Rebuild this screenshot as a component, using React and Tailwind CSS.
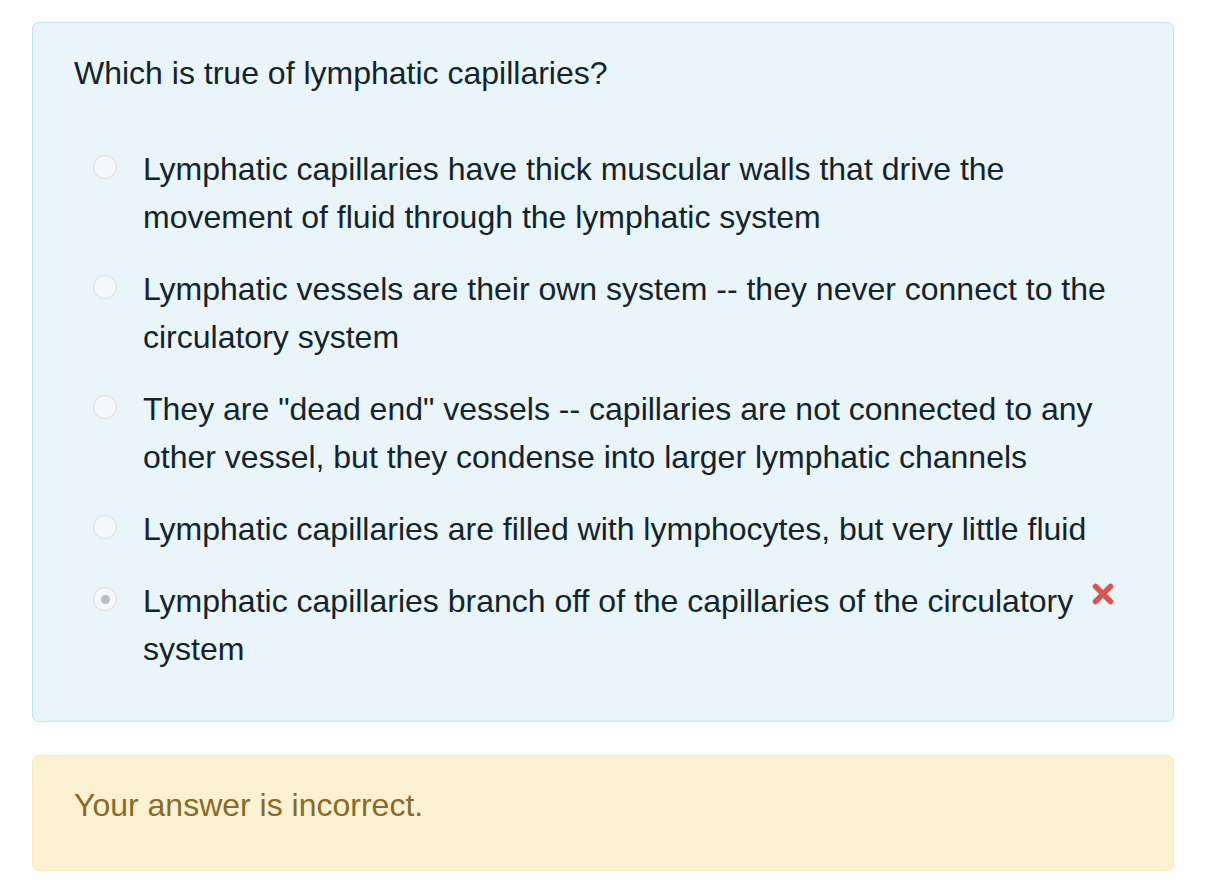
import React from 'react';

const options = [
  { text: 'Lymphatic capillaries have thick muscular walls that drive the movement of fluid through the lymphatic system' },
  { text: 'Lymphatic vessels are their own system -- they never connect to the circulatory system' },
  { text: 'They are "dead end" vessels -- capillaries are not connected to any other vessel, but they condense into larger lymphatic channels' },
  { text: 'Lymphatic capillaries are filled with lymphocytes, but very little fluid' },
  { text: 'Lymphatic capillaries branch off of the capillaries of the circulatory system', selected: true, wrong: true },
];

const Radio = ({ checked }) => (
  <span className="mt-[10px] flex h-[24px] w-[24px] shrink-0 items-center justify-center rounded-full border border-[#dadde0] bg-[#f5f7f9]">
    {checked && <span className="h-[9px] w-[9px] rounded-full bg-[#bdbdbd]" />}
  </span>
);

const WrongMark = () => (
  <svg className="mt-[5px] ml-[6px] shrink-0" width="24" height="24" viewBox="0 0 24 24">
    <path d="M4.5 4.5 L19.5 19.5 M19.5 4.5 L4.5 19.5" stroke="#d9534f" strokeWidth="5.5" strokeLinecap="round" />
  </svg>
);

export default function App() {
  return (
    <div className="bg-white px-[32px] pt-[22px] pb-[18px] text-[32px] leading-[48px] text-[#14242c]" style={{ fontFamily: '"Liberation Sans", Arial, sans-serif' }}>
      {/* Question panel */}
      <div className="rounded-[7px] border border-[#c4e3eb] bg-[#e9f5f8] pl-[41px] pr-[58px] pt-[26px] pb-[48px]">
        <p>Which is true of lymphatic capillaries?</p>
        <div className="mt-[48px] flex flex-col gap-[24px] pl-[19px]">
          {options.map((o) => (
            <div key={o.text} className="flex items-start">
              <Radio checked={o.selected} />
              <div className="ml-[26px] flex flex-1 items-start">
                <span className="flex-1">{o.text}</span>
                {o.wrong && <WrongMark />}
              </div>
            </div>
          ))}
        </div>
      </div>

      {/* Feedback */}
      <div className="mt-[33px] rounded-[7px] border border-[#fbe9b8] bg-[#fcf2d1] pl-[41px] pt-[25px] pb-[41px] text-[#8b6a28]">
        Your answer is incorrect.
      </div>
    </div>
  );
}
